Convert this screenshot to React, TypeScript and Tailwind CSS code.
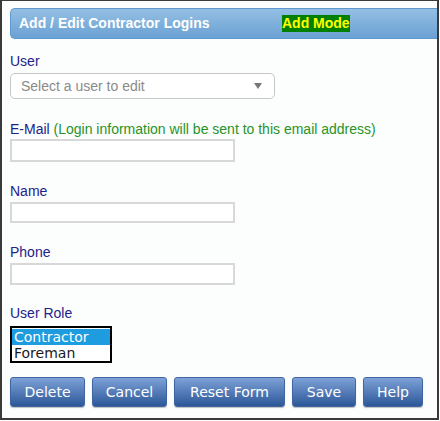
import React from "react";

const labelCls =
  "block text-[14px] leading-[16px] text-[#22228c] font-['Liberation_Sans',Arial,sans-serif]";

function Btn({ w, children }: { w: string; children: React.ReactNode }) {
  return (
    <button
      className={`${w} h-[30px] rounded-[3px] border border-[#3f65a3] bg-gradient-to-b from-[#7ea2d8] to-[#2c5797] text-white text-[14px] font-['DejaVu_Sans',Verdana,sans-serif] shadow-[0_1px_1px_rgba(0,0,0,0.25)]`}
    >
      {children}
    </button>
  );
}

export default function App() {
  return (
    <div className="w-[439px] h-[420px] border-[#3a3a3a] border-t border-l-2 border-r-2 border-b-2 bg-[#fcfdfd] font-['Liberation_Sans',Arial,sans-serif] box-border overflow-hidden">
      <div className="ml-[8px] mt-[7px] h-[31px] rounded-l-[5px] border border-r-0 border-[#5e98cc] bg-gradient-to-b from-[#94bfe4] to-[#6aa1d3] flex items-center pl-[8px]">
        <span className="w-[263px] text-white font-bold text-[14px] leading-[17px]">
          Add / Edit Contractor Logins
        </span>
        <span className="bg-[#008000] text-[#ffff00] font-bold text-[14px] leading-[17px]">
          Add Mode
        </span>
      </div>

      <div className="pl-[8px]">
        <label className={`${labelCls} mt-[14px]`}>User</label>
        <div className="mt-[4px] w-[265px] h-[26px] rounded-[5px] border border-[#c6c6c6] bg-white flex items-center justify-between pl-[10px] pr-[12px]">
          <span className="text-[14px] text-[#8a8a8a]">Select a user to edit</span>
          <svg width="8" height="6" viewBox="0 0 8 6">
            <path d="M0 0 L8 0 L4 6 Z" fill="#777" />
          </svg>
        </div>

        <label className={`${labelCls} mt-[22px]`}>
          E-Mail <span className="text-[#279427]">(Login information will be sent to this email address)</span>
        </label>
        <div className="mt-[2px] w-[225px] h-[23px] border-2 border-[#d8d8d8] bg-white" />

        <label className={`${labelCls} mt-[21px]`}>Name</label>
        <div className="mt-[3px] w-[225px] h-[21px] border-2 border-[#d8d8d8] bg-white" />

        <label className={`${labelCls} mt-[21px]`}>Phone</label>
        <div className="mt-[3px] w-[225px] h-[22px] border-2 border-[#d8d8d8] bg-white" />

        <label className={`${labelCls} mt-[20px]`}>User Role</label>
        <div className="mt-[5px] w-[102px] h-[37px] border-2 border-black bg-white font-['DejaVu_Sans',Verdana,sans-serif] text-[14px] leading-[16px] pt-[1px]">
          <div className="bg-[#1e9ce0] text-white pl-[2px]">Contractor</div>
          <div className="text-[#1a1a1a] pl-[2px]">Foreman</div>
        </div>

        <div className="mt-[14px] flex gap-[7px]">
          <Btn w="w-[75px]">Delete</Btn>
          <Btn w="w-[75px]">Cancel</Btn>
          <Btn w="w-[111px]">Reset Form</Btn>
          <Btn w="w-[64px]">Save</Btn>
          <Btn w="w-[60px]">Help</Btn>
        </div>
      </div>
    </div>
  );
}
